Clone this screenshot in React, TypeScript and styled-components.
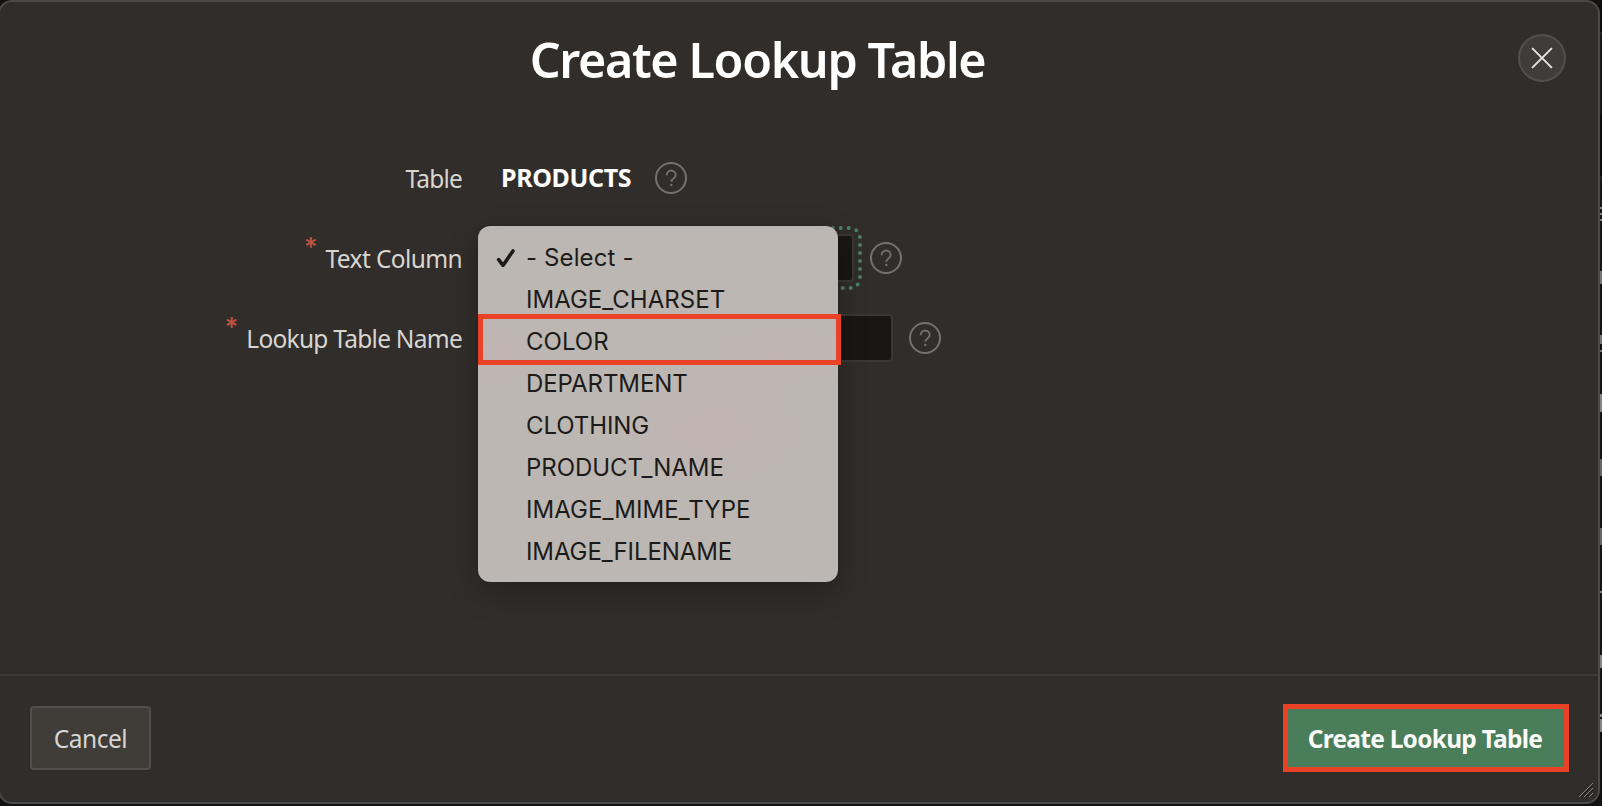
import React from "react";
import styled, { createGlobalStyle, css } from "styled-components";

const GlobalStyle = createGlobalStyle`
  *, *::before, *::after { box-sizing: border-box; }
  html, body { margin: 0; background: #121110; overflow: hidden; }
  button { font: inherit; margin: 0; }
`;

const Screen = styled.div`
  position: relative;
  width: 1602px;
  height: 806px;
  overflow: hidden;
  background: #121110;
  color: #d8d6d2;
  font-family: "Noto Sans", "Open Sans", sans-serif;
  font-size: 24.5px;
`;

/* The page behind the modal shows only as a thin strip at the right edge. */
const Backdrop = styled.div`
  position: absolute;
  inset: 0 0 0 auto;
  width: 2px;
`;

const BackdropPiece = styled.div<{ $h: number; $c: string }>`
  height: ${(p) => p.$h}px;
  background: ${(p) => p.$c};
`;

const Dialog = styled.section`
  position: relative;
  display: flex;
  flex-direction: column;
  width: 1602px;
  height: 804px;
  margin-left: -2px;
  background: #312d2a;
  border: 2px solid #4c4845;
  border-radius: 14px;
`;

const Header = styled.header`
  display: flex;
  align-items: center;
  padding: 32px 32px 0 0;
`;

const Title = styled.h1`
  flex: 1;
  margin: 0;
  padding: 2px 3px 0 0;
  text-align: center;
  color: #fff;
  font-size: 48.5px;
  font-weight: 600;
  line-height: 46px;
  letter-spacing: -1.38px;
`;

const CloseButton = styled.button`
  display: grid;
  place-items: center;
  width: 48px;
  height: 48px;
  padding: 0;
  color: #e3e1de;
  background: #403c39;
  border: 2px solid #534f4b;
  border-radius: 50%;
`;

const Form = styled.div`
  flex: 1;
  padding-top: 56px;
`;

const Row = styled.div`
  position: relative;
  display: flex;
  align-items: center;
  height: 80px;
`;

const Label = styled.label<{ $spacing: number }>`
  display: flex;
  justify-content: flex-end;
  width: 478px;
  padding: 1px 16px 0 0;
  line-height: 34px;
  white-space: nowrap;
  letter-spacing: ${(p) => p.$spacing}px;
`;

const Required = styled.span`
  height: 34px;
  margin: -12px 8px 0 0;
  color: #c1543f;
  font: 500 26px/34px "Inter", sans-serif;
  letter-spacing: 0;
`;

const Value = styled.strong`
  width: 154px;
  margin-left: 23px;
  padding-bottom: 2px;
  color: #fff;
  font-size: 25px;
  line-height: 34px;
  letter-spacing: -0.36px;
`;

const Field = styled.div<{ $width: number; $focused?: boolean }>`
  width: ${(p) => p.$width}px;
  height: 48px;
  margin-left: 8px;
  background: #191715;
  border: 2px solid #3b3734;
  border-radius: 4px;
  ${(p) =>
    p.$focused &&
    css`
      outline: 4px dotted #4b8462;
      outline-offset: 4px;
    `}
`;

const HelpButton = styled.button<{ $gap: number }>`
  display: block;
  width: 32px;
  height: 32px;
  margin-left: ${(p) => p.$gap}px;
  padding: 0;
  color: #74716e;
  background: none;
  border: 0;
  svg { display: block; }
`;

const Menu = styled.ul`
  position: absolute;
  z-index: 2;
  left: 478px;
  top: 8px;
  width: 360px;
  height: 356px;
  margin: 0;
  padding: 10px 0;
  list-style: none;
  color: #1c1b1a;
  background:
    radial-gradient(ellipse 120px 75px at 235px 205px, rgba(194, 180, 178, 0.75), rgba(194, 180, 178, 0)),
    radial-gradient(ellipse 80px 45px at 10px 130px, rgba(194, 180, 178, 0.7), rgba(194, 180, 178, 0)),
    radial-gradient(ellipse 110px 45px at 300px 130px, rgba(194, 180, 178, 0.6), rgba(194, 180, 178, 0)),
    #bcb7b2;
  border-radius: 12px;
  box-shadow: 0 0 1px rgba(0, 0, 0, 0.7), 0 10px 30px rgba(0, 0, 0, 0.28);
  font: 400 24px/42px "Inter", sans-serif;
`;

const Option = styled.li<{ $spacing?: number }>`
  display: flex;
  align-items: center;
  height: 42px;
  padding: 2px 0 0 18px;
  letter-spacing: ${(p) => p.$spacing ?? 0}px;
`;

const CheckSlot = styled.span`
  width: 30px;
  height: 22px;
  svg { display: block; }
`;

const Highlight = styled.div`
  position: absolute;
  z-index: 3;
  left: 478px;
  top: 96px;
  width: 363px;
  height: 51px;
  border: 5px solid #ea4226;
`;

const Footer = styled.footer`
  display: flex;
  align-items: center;
  justify-content: space-between;
  height: 128px;
  padding: 0 29px 2px 30px;
  border-top: 2px solid #3f3b38;
`;

const CancelButton = styled.button`
  width: 121px;
  height: 64px;
  padding: 0;
  color: #d8d6d2;
  background: #403c38;
  border: 2px solid #524e4a;
  border-radius: 4px;
  letter-spacing: -0.5px;
`;

const PrimaryButton = styled.button`
  width: 286px;
  height: 68px;
  padding: 0 2px 0 0;
  color: #fafaf8;
  background: #4a7d59;
  border: 5px solid #ea4226;
  font-weight: 700;
  letter-spacing: -0.75px;
`;

const Grip = styled.svg`
  position: absolute;
  right: 4px;
  bottom: 4px;
`;

const Help = ({ gap }: { gap: number }) => (
  <HelpButton $gap={gap} aria-label="Help">
    <svg width="32" height="32" viewBox="0 0 32 32" fill="none" stroke="currentColor">
      <circle cx="16" cy="16" r="15" strokeWidth="2" />
      <path d="M11.7 13.2V13a4.5 4.5 0 0 1 9 0c0 3.6-4.4 3.2-4.4 6.8" strokeWidth="1.9" />
      <circle cx="16.3" cy="22.9" r="1.2" fill="currentColor" stroke="none" />
    </svg>
  </HelpButton>
);

const Check = () => (
  <svg width="20" height="22" viewBox="0 0 20 22" fill="none" stroke="currentColor" strokeWidth="3.6" strokeLinecap="round" strokeLinejoin="round">
    <path d="M2.6 12.6L7.1 18.3L17 3.9" />
  </svg>
);

const options: { text: string; spacing?: number }[] = [
  { text: "- Select -", spacing: 0.12 },
  { text: "IMAGE_CHARSET", spacing: 0.02 },
  { text: "COLOR" },
  { text: "DEPARTMENT", spacing: -0.08 },
  { text: "CLOTHING", spacing: -0.08 },
  { text: "PRODUCT_NAME", spacing: -0.05 },
  { text: "IMAGE_MIME_TYPE", spacing: 0.05 },
  { text: "IMAGE_FILENAME", spacing: -0.08 },
];

const backdrop: [number, string][] = [
  [32, "#0f0e0d"], [2, "#262422"], [80, "#1a1918"], [62, "#0e0d0d"], [3, "#242322"],
  [28, "#171616"], [2, "#858483"], [4, "#171616"], [2, "#858483"], [4, "#171616"], [2, "#858483"],
  [50, "#171616"], [13, "#777675"], [51, "#151413"], [9, "#777675"], [6, "#151413"], [2, "#777675"],
  [42, "#151413"], [18, "#858483"], [47, "#151413"], [17, "#676665"], [52, "#151413"], [17, "#676665"],
  [46, "#151413"], [2, "#858483"], [62, "#151413"], [13, "#858483"], [46, "#151413"],
  [3, "#858483"], [2, "#151413"], [13, "#858483"],
];

export default function App() {
  return (
    <Screen>
      <GlobalStyle />
      <Backdrop>
        {backdrop.map(([h, c], i) => (
          <BackdropPiece key={i} $h={h} $c={c} />
        ))}
      </Backdrop>
      <Dialog role="dialog">
        <Header>
          <Title>Create Lookup Table</Title>
          <CloseButton aria-label="Close">
            <svg width="22" height="22" viewBox="0 0 22 22" fill="none" stroke="currentColor" strokeWidth="2" strokeLinecap="round">
              <path d="M1.6 1.6L20.4 20.4M20.4 1.6L1.6 20.4" />
            </svg>
          </CloseButton>
        </Header>
        <Form>
          <Row>
            <Label $spacing={-0.8}>Table</Label>
            <Value>PRODUCTS</Value>
            <Help gap={0} />
          </Row>
          <Row>
            <Label $spacing={-0.62}>
              <Required>*</Required>Text Column
            </Label>
            <Field $width={368} $focused />
            <Help gap={16} />
            <Menu>
              {options.map((o, i) => (
                <Option key={o.text} $spacing={o.spacing}>
                  <CheckSlot>{i === 0 && <Check />}</CheckSlot>
                  {o.text}
                </Option>
              ))}
            </Menu>
            <Highlight />
          </Row>
          <Row>
            <Label $spacing={-0.74}>
              <Required>*</Required>Lookup Table Name
            </Label>
            <Field $width={407} />
            <Help gap={16} />
          </Row>
        </Form>
        <Footer>
          <CancelButton>Cancel</CancelButton>
          <PrimaryButton>Create Lookup Table</PrimaryButton>
        </Footer>
        <Grip width="15" height="15" viewBox="0 0 15 15" fill="none">
          <path d="M0 14L14 0M5 14L14 5M10 14L14 10" stroke="#8a8784" strokeWidth="1" />
          <path d="M2 14L14 2M7 14L14 7" stroke="#1d1b19" strokeWidth="1" />
        </Grip>
      </Dialog>
    </Screen>
  );
}
